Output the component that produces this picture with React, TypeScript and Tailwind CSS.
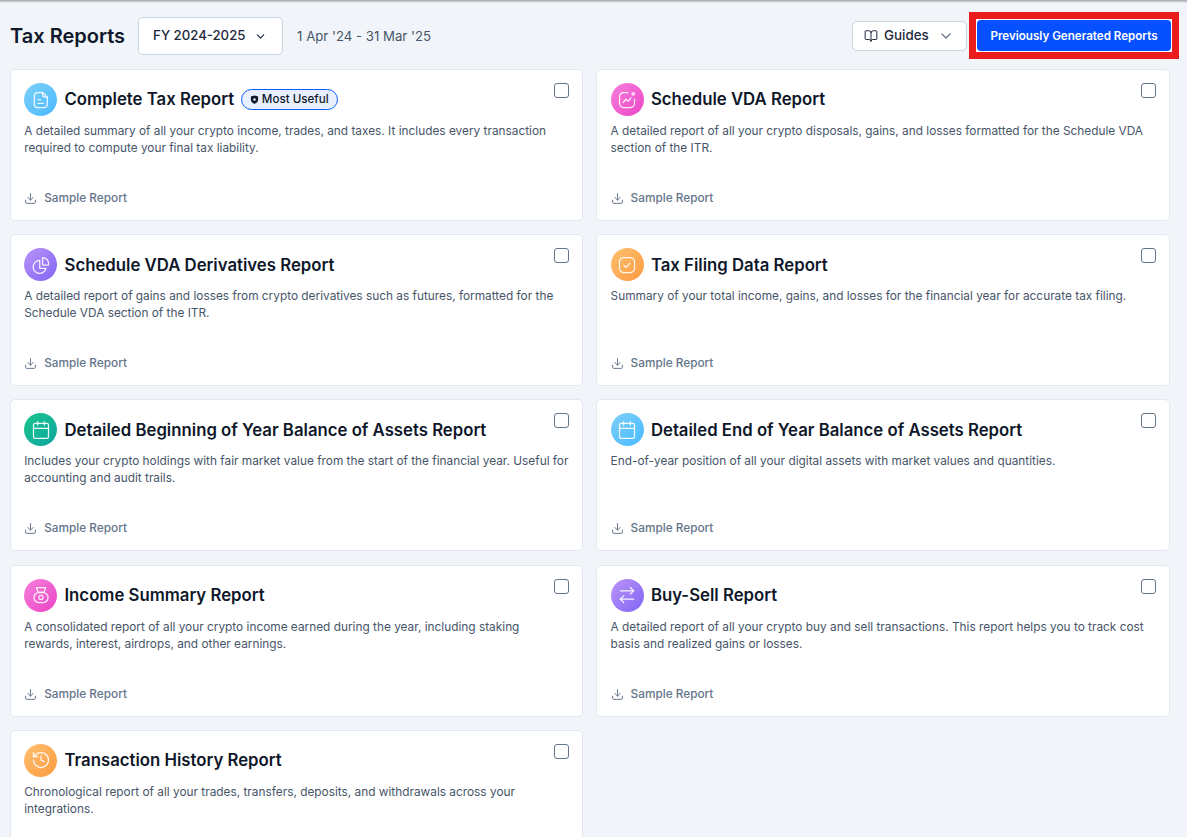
import React from "react";
import { ChevronDown, BookOpen, Download, Calendar, ArrowRightLeft, History } from "lucide-react";

const sw = 1.5;

function FileIcon() {
  return (
    <svg width="20" height="20" viewBox="0 0 24 24" fill="none" stroke="currentColor" strokeWidth={sw} strokeLinecap="round" strokeLinejoin="round">
      <path d="M8 3h6l5.5 5.5V17a4 4 0 0 1-4 4H8a4 4 0 0 1-4-4V7a4 4 0 0 1 4-4Z" />
      <path d="M14 3v3a2.5 2.5 0 0 0 2.5 2.5h3" />
      <path d="M8.5 11.5h3M8.5 16h6.5" />
    </svg>
  );
}
function ChartIcon() {
  return (
    <svg width="20" height="20" viewBox="0 0 24 24" fill="none" stroke="currentColor" strokeWidth={sw} strokeLinecap="round" strokeLinejoin="round">
      <path d="M13 3H8a5 5 0 0 0-5 5v8a5 5 0 0 0 5 5h8a5 5 0 0 0 5-5v-5" />
      <path d="M7.5 15l3.2-4 3 2.4 3-4" />
      <circle cx="19.5" cy="4.5" r="1.5" />
    </svg>
  );
}
function PieIcon() {
  return (
    <svg width="20" height="20" viewBox="0 0 24 24" fill="none" stroke="currentColor" strokeWidth={sw} strokeLinecap="round" strokeLinejoin="round">
      <path d="M10.5 6.5a7.8 7.8 0 1 0 7.5 9.5h-7.5Z" />
      <path d="M14 3a7 7 0 0 1 7 7v2.2h-7Z" />
    </svg>
  );
}
function CheckBoxIcon() {
  return (
    <svg width="20" height="20" viewBox="0 0 24 24" fill="none" stroke="currentColor" strokeWidth={sw} strokeLinecap="round" strokeLinejoin="round">
      <rect x="3" y="3" width="18" height="18" rx="5" />
      <path d="M8.5 12.5l2.5 2.3 4.5-5" />
    </svg>
  );
}
function ScaleIcon() {
  return (
    <svg width="20" height="20" viewBox="0 0 24 24" fill="none" stroke="currentColor" strokeWidth={sw} strokeLinecap="round" strokeLinejoin="round">
      <path d="M6.5 3h11l-1.8 5.5H8.3Z" />
      <rect x="3.5" y="9" width="17" height="12" rx="6" />
      <circle cx="12" cy="15" r="2.5" />
    </svg>
  );
}
function ShieldIcon() {
  return (
    <svg width="9" height="9" viewBox="0 0 12 12" fill="#0f172a">
      <path fillRule="evenodd" d="M6 .5 10.8 2v4.2C10.8 9 8.4 10.8 6 11.5 3.6 10.8 1.2 9 1.2 6.2V2L6 .5Zm0 3.7a1.8 1.8 0 1 0 0 3.6 1.8 1.8 0 0 0 0-3.6Z" />
    </svg>
  );
}

type Report = { title: string; desc: string; icon: React.ReactNode; grad: string; badge?: boolean };

const reports: Report[] = [
  { title: "Complete Tax Report", badge: true, desc: "A detailed summary of all your crypto income, trades, and taxes. It includes every transaction required to compute your final tax liability.", icon: <FileIcon />, grad: "bg-gradient-to-br from-[#7cd0f8] to-[#47b9ff]" },
  { title: "Schedule VDA Report", desc: "A detailed report of all your crypto disposals, gains, and losses formatted for the Schedule VDA section of the ITR.", icon: <ChartIcon />, grad: "bg-gradient-to-br from-[#f57fdc] to-[#ec3fc6]" },
  { title: "Schedule VDA Derivatives Report", desc: "A detailed report of gains and losses from crypto derivatives such as futures, formatted for the Schedule VDA section of the ITR.", icon: <PieIcon />, grad: "bg-gradient-to-br from-[#bc94f7] to-[#8263f4]" },
  { title: "Tax Filing Data Report", desc: "Summary of your total income, gains, and losses for the financial year for accurate tax filing.", icon: <CheckBoxIcon />, grad: "bg-gradient-to-br from-[#fdc070] to-[#fd9a3e]" },
  { title: "Detailed Beginning of Year Balance of Assets Report", desc: "Includes your crypto holdings with fair market value from the start of the financial year. Useful for accounting and audit trails.", icon: <Calendar size={20} strokeWidth={sw} />, grad: "bg-gradient-to-br from-[#1cc58a] to-[#0ea5a0]" },
  { title: "Detailed End of Year Balance of Assets Report", desc: "End-of-year position of all your digital assets with market values and quantities.", icon: <Calendar size={20} strokeWidth={sw} />, grad: "bg-gradient-to-br from-[#7cd0f8] to-[#47b9ff]" },
  { title: "Income Summary Report", desc: "A consolidated report of all your crypto income earned during the year, including staking rewards, interest, airdrops, and other earnings.", icon: <ScaleIcon />, grad: "bg-gradient-to-br from-[#f57fdc] to-[#ec3fc6]" },
  { title: "Buy-Sell Report", desc: "A detailed report of all your crypto buy and sell transactions. This report helps you to track cost basis and realized gains or losses.", icon: <ArrowRightLeft size={20} strokeWidth={sw} />, grad: "bg-gradient-to-br from-[#bc94f7] to-[#8263f4]" },
  { title: "Transaction History Report", desc: "Chronological report of all your trades, transfers, deposits, and withdrawals across your integrations.", icon: <History size={20} strokeWidth={sw} />, grad: "bg-gradient-to-br from-[#fdc070] to-[#fd9a3e]" },
];

function Card({ r }: { r: Report }) {
  return (
    <div className="h-[152px] bg-white border border-[#e2e8f0] rounded-[5px] pt-[13px] pl-[13.2px] pr-[12px] pb-[13px] flex flex-col">
      <div className="flex items-center gap-[7.3px] h-[33px]">
        <div className={`w-[33px] h-[33px] rounded-full flex items-center justify-center text-white/90 shrink-0 ${r.grad}`}>{r.icon}</div>
        <span className="text-[16.75px] font-semibold text-[#0f172a] leading-none whitespace-nowrap mt-[0.5px]">{r.title}</span>
        {r.badge && (
          <span className="h-[21px] px-[8px] -ml-[0.5px] flex items-center gap-[3px] rounded-full border border-[#0b5cff] bg-[#e8f0fe] text-[11.6px] font-medium text-[#0f172a]">
            <ShieldIcon />
            Most Useful
          </span>
        )}
        <div className="ml-auto self-start mr-[1px] w-[15px] h-[15px] rounded-[3px] border-[1.5px] border-[#64748b] bg-white shrink-0" />
      </div>
      <p className="mt-[7px] text-[11.85px] leading-[17px] text-[#475569]">{r.desc}</p>
      <div className="mt-auto flex items-center gap-[7px] text-[#64748b]">
        <Download size={13} strokeWidth={1.8} />
        <span className="text-[11.8px] leading-[17px] font-medium">Sample Report</span>
      </div>
    </div>
  );
}

export default function App() {
  return (
    <div className="h-[837px] overflow-hidden bg-[#f1f5f9] relative" style={{ fontFamily: '"Inter", "Liberation Sans", sans-serif' }}>
      <div className="absolute top-0 left-0 right-0 h-[3px] bg-gradient-to-b from-[#a3a3a8] to-[#f1f5f9]" />
      <div className="flex items-center pl-[10px] pr-[8px] pt-[12px] h-[69px] pb-[10px]">
        <h1 className="text-[20px] font-semibold text-[#0f172a] leading-none mt-[1px]">Tax Reports</h1>
        <button className="ml-[13px] w-[145px] h-[38px] bg-white border border-[#cbd5e1] rounded-[5px] flex items-center pl-[14px] pt-[1px] gap-[8.5px] text-[13.2px] font-medium text-[#1e293b]">
          FY 2024-2025
          <ChevronDown size={13} strokeWidth={2} className="text-[#1e293b]" />
        </button>
        <span className="ml-[14px] mt-[2px] text-[13.2px] text-[#475569]">1 Apr '24 - 31 Mar '25</span>
        <div className="ml-auto flex items-center">
          <button className="w-[115px] h-[30px] bg-white border border-[#cbd5e1] rounded-[5px] flex items-center pl-[11px] gap-[6px] text-[13.4px] font-medium text-[#1e293b] mr-[2px]">
            <BookOpen size={14} strokeWidth={1.7} />
            Guides
            <ChevronDown size={16} strokeWidth={1.8} className="text-[#64748b] ml-[3px]" />
          </button>
          <div className="border-[7px] border-[#ea1c1c] bg-white p-[1px] w-[210px] h-[47px]">
            <button className="w-full h-full bg-[#0650ff] rounded-[4px] text-white text-[11.6px] font-semibold whitespace-nowrap pt-[2px]">
              Previously Generated Reports
            </button>
          </div>
        </div>
      </div>
      <div className="grid grid-cols-2 gap-x-[13.2px] gap-y-[13.2px] pl-[10px] pr-[17.4px]">
        {reports.map((r) => (
          <Card key={r.title} r={r} />
        ))}
      </div>
    </div>
  );
}
